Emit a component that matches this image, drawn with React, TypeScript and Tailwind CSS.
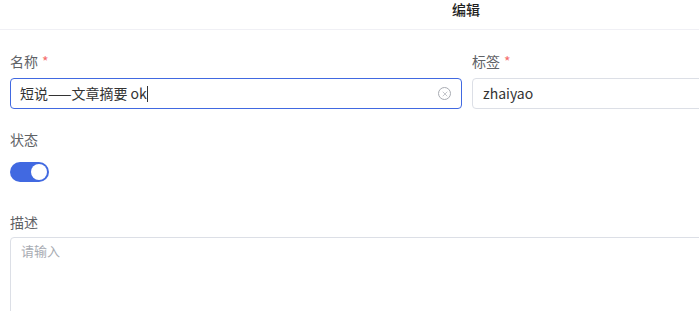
import { X } from 'lucide-react';

/**
 * Edit dialog — form with name, tag, status switch and description.
 */

function Label({ text, required }: { text: string; required?: boolean }) {
  return (
    <div className="flex h-[20px] items-center text-[14px] leading-[20px] text-[#606266]">
      <span>{text}</span>
      {required && <span className="ml-[4px] text-[#f56c6c]">*</span>}
    </div>
  );
}

export default function App() {
  return (
    <div
      className="h-[311px] w-[699px] overflow-hidden bg-white"
      style={{ fontFamily: '"Noto Sans CJK SC", "Liberation Sans", sans-serif' }}
    >
      <div className="w-[932px]">
        {/* Header */}
        <div className="flex h-[30px] items-start justify-center border-b border-[#f0f0f5] pt-[1px]">
          <span className="text-[14px] font-medium leading-[16px] text-[#1f1f1f]">编辑</span>
        </div>

        {/* Body */}
        <div className="px-[10px] pt-[21px]">
          <div className="grid grid-cols-[452px_452px] gap-x-[10px]">
            <div>
              <Label text="名称" required />
              <div className="mt-[7px] flex h-[31px] items-center rounded-[4px] border border-[#4169e1] px-[9px]">
                <span className="flex-1 text-[14px] text-[#333333]">
                  短说——文章摘要 ok<span className="inline-block h-[16px] w-px translate-y-[3px] bg-[#333]" />
                </span>
                <span className="mr-[1px] flex h-[13px] w-[13px] items-center justify-center rounded-full border border-[#a8abb2]">
                  <X size={8} strokeWidth={2} className="text-[#a8abb2]" />
                </span>
              </div>
            </div>
            <div>
              <Label text="标签" required />
              <div className="mt-[7px] flex h-[31px] items-center rounded-[4px] border border-[#dcdfe6] px-[10px]">
                <span className="text-[14px] text-[#333333]">zhaiyao</span>
              </div>
            </div>
          </div>

          {/* Status */}
          <div className="mt-[20px]">
            <Label text="状态" />
            <div className="mt-[13px] flex h-[20px] w-[39px] items-center justify-end rounded-full bg-[#4169e1] pr-[2px]">
              <div className="h-[16px] w-[16px] rounded-full bg-white" />
            </div>
          </div>

          {/* Description */}
          <div className="mt-[30px]">
            <Label text="描述" />
            <div className="mt-[5px] h-[120px] rounded-[4px] border border-[#dcdfe6] px-[10px] pt-[4px]">
              <span className="block text-[13px] leading-[18px] text-[#a8abb2]">请输入</span>
            </div>
          </div>
        </div>
      </div>
    </div>
  );
}
